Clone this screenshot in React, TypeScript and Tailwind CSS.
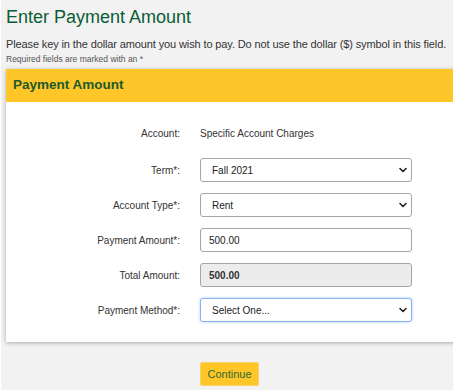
import { ChangeEvent, useState } from "react";

function Chevron() {
    return (
        <svg
            className="pointer-events-none absolute right-[5px] top-1/2 -translate-y-1/2"
            width="8"
            height="6"
            viewBox="0 0 8 6"
            fill="none"
        >
            <path d="M1 1.5 L4 4.5 L7 1.5" stroke="#222" strokeWidth="1.6" strokeLinecap="round" strokeLinejoin="round" />
        </svg>
    );
}

interface SelectProps {
    value: string;
    options: string[];
    focused?: boolean;
    onChange: (v: string) => void;
}

function Select({ value, options, focused, onChange }: SelectProps) {
    return (
        <div className="relative h-6">
            <select
                value={value}
                onChange={(e: ChangeEvent<HTMLSelectElement>) => onChange(e.target.value)}
                className={
                    focused
                        ? "h-6 w-full appearance-none rounded-[3px] border border-[#86b3ec] bg-white pl-[11px] text-[10px] text-[#222] shadow-[0_0_3px_rgba(66,133,244,0.45)] outline-none"
                        : "h-6 w-full appearance-none rounded-[3px] border border-[#a6a6a6] bg-white pl-[11px] text-[10px] text-[#222] outline-none"
                }
            >
                {options.map((o) => (
                    <option key={o}>{o}</option>
                ))}
            </select>
            <Chevron />
        </div>
    );
}

export default function App() {
    const [term, setTerm] = useState("Fall 2021");
    const [type, setType] = useState("Rent");
    const [amount, setAmount] = useState("500.00");
    const [method, setMethod] = useState("Select One...");

    return (
        <div className="h-[390px] w-[453px] overflow-hidden border-l border-white bg-[#f2f2f2] font-['Liberation_Sans',Arial,sans-serif]">
            <div className="pl-[5px]">
                <h1 className="pt-[6px] text-[18px] leading-[22px] text-[#0b5c36]">Enter Payment Amount</h1>
                <p className="mt-[9px] text-[11px] leading-[14px] tracking-[-0.12px] whitespace-nowrap text-[#333]">
                    Please key in the dollar amount you wish to pay. Do not use the dollar ($) symbol in this field.
                </p>
                <p className="mt-[3px] text-[8.5px] leading-[11px] text-[#555]">Required fields are marked with an *</p>

                {/* Payment card */}
                <div className="mt-[4px] w-[470px] bg-white shadow-[0_1px_4px_rgba(0,0,0,0.3)]">
                    <div className="flex h-[33px] items-center bg-[#ffc629] pl-[7px]">
                        <h2 className="text-[13.5px] font-bold text-[#1b5a2d]">Payment Amount</h2>
                    </div>
                    <div className="grid grid-cols-[174px_212px] items-center gap-x-[20px] gap-y-[11px] pt-[19px] pb-[20px] text-[10px] text-[#333]">
                        <div className="mb-[2px] flex h-6 items-center justify-end">Account:</div>
                        <div className="mb-[2px] flex h-6 items-center">Specific Account Charges</div>

                        <div className="text-right">Term*:</div>
                        <Select value={term} options={["Fall 2021", "Spring 2022"]} onChange={setTerm} />

                        <div className="text-right">Account Type*:</div>
                        <Select value={type} options={["Rent", "Meal Plan"]} onChange={setType} />

                        <div className="text-right">Payment Amount*:</div>
                        <input
                            value={amount}
                            onChange={(e) => setAmount(e.target.value)}
                            className="h-6 w-full rounded-[3px] border border-[#a6a6a6] bg-white pl-[8px] text-[10px] text-[#222] outline-none"
                        />

                        <div className="text-right">Total Amount:</div>
                        <div className="flex h-6 items-center rounded-[3px] border border-[#a6a6a6] bg-[#ececec] pl-[8px] font-bold text-[#333]">
                            500.00
                        </div>

                        <div className="text-right">Payment Method*:</div>
                        <Select
                            value={method}
                            options={["Select One...", "Credit Card", "eCheck"]}
                            focused
                            onChange={setMethod}
                        />
                    </div>
                </div>

                <button className="mt-[20px] ml-[194px] flex h-6 w-[59px] items-center justify-center rounded-[2px] border border-[#f7d46a] bg-[#ffc629] text-[11px] text-[#2d6a2f]">
                    Continue
                </button>
            </div>
        </div>
    );
}
